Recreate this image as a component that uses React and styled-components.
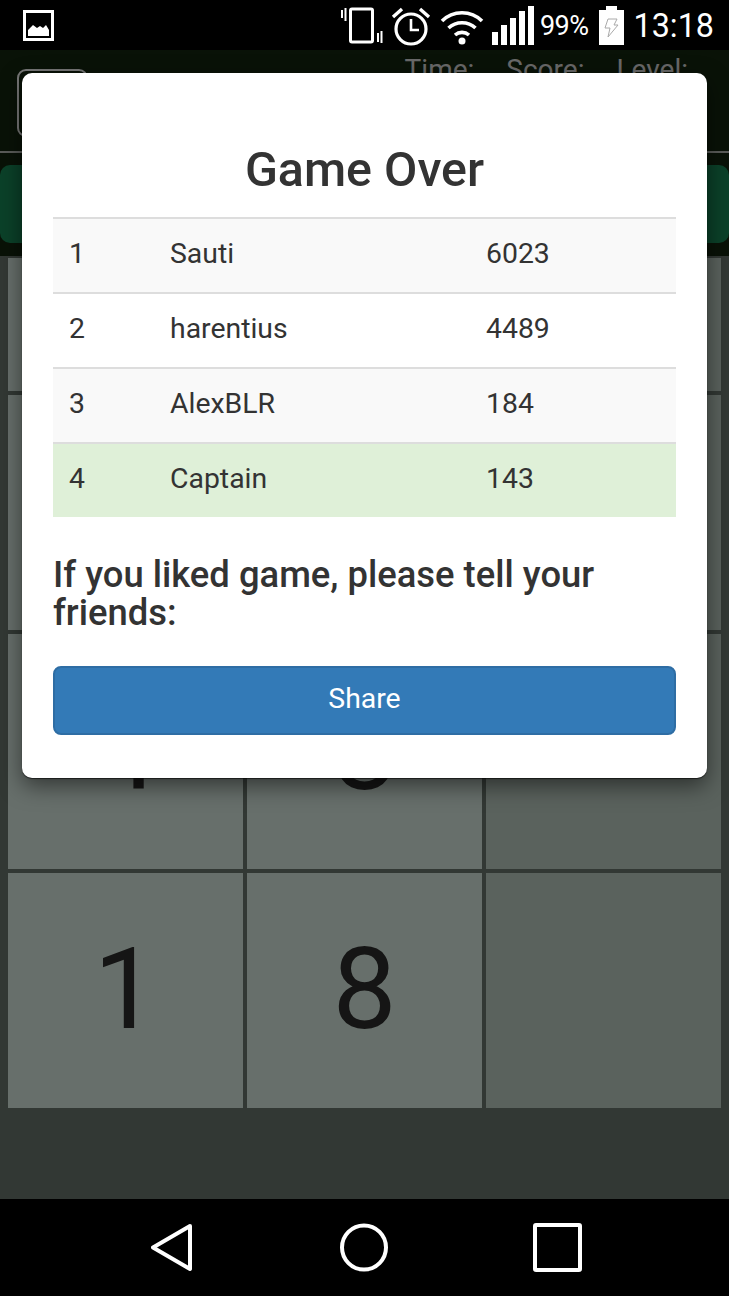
import React from "react";
import styled, { createGlobalStyle } from "styled-components";

const Global = createGlobalStyle`
  html, body { margin: 0; padding: 0; background: #000; }
  * { box-sizing: border-box; }
  #root { width: 729px; height: 1296px; overflow: hidden; }
`;

const Page = styled.div`
  width: 729px;
  height: 1296px;
  display: flex;
  flex-direction: column;
  font-family: Roboto, "Liberation Sans", sans-serif;
  background: #000;
`;

const StatusBar = styled.div`
  height: 50px;
  flex: none;
  background: #000;
  display: flex;
  align-items: center;
  justify-content: space-between;
  padding: 0 15px 0 23px;
  color: #fff;
`;

const StatusRight = styled.div`
  display: flex;
  align-items: center;
  height: 50px;
`;

const Percent = styled.span`
  font-size: 27px;
  letter-spacing: -0.5px;
  margin: 0 10px 0 6px;
  position: relative;
  top: 1px;
`;

const Clock = styled.span`
  font-size: 32.3px;
  margin-left: 10px;
  position: relative;
  top: 1px;
`;

const Stage = styled.div`
  position: relative;
  height: 1149px;
  flex: none;
  background: #657069;
  display: flex;
  flex-direction: column;
  overflow: hidden;
`;

const Header = styled.div`
  height: 103px;
  flex: none;
  background: #12240e;
  border-bottom: 2px solid #b4b8b2;
  display: flex;
  justify-content: space-between;
  padding: 19px 41px 0 17px;
`;

const LogoBox = styled.div`
  width: 71px;
  height: 68px;
  border: 2px solid #eee;
  border-radius: 9px;
`;

const Stats = styled.div`
  display: flex;
  gap: 32px;
  margin-top: -16px;
  font-size: 28px;
  color: #d2d2d2;
`;

const ActionStrip = styled.div`
  height: 103px;
  flex: none;
  background: #12240e;
  padding: 12px 0 13px;
`;

const ActionButton = styled.div`
  height: 78px;
  background: #178253;
  border-radius: 10px;
`;

const Board = styled.div`
  flex: 1;
  background: #657069;
  padding: 2px 8px 0;
  display: grid;
  grid-template-columns: repeat(3, 235px);
  grid-template-rows: 133px 235px 235px 235px;
  gap: 4px;
  align-content: start;
`;

const Cell = styled.div`
  background: ${p => (p.$filled ? "#cfdfd6" : "#b4c4bb")};
  display: flex;
  align-items: center;
  justify-content: center;
  color: #2a2a2a;
  font-size: 114px;
  line-height: 1;
  padding-bottom: 3px;
  font-weight: 400;
  overflow: hidden;
`;

const Backdrop = styled.div`
  position: absolute;
  inset: 0;
  background: rgba(0, 0, 0, 0.5);
  padding: 23px 22px 0;
`;

const Modal = styled.div`
  height: 705px;
  background: #fff;
  border-radius: 10px;
  box-shadow: 0 1px 1px rgba(0, 0, 0, 0.6), 0 8px 22px rgba(0, 0, 0, 0.5);
  padding: 0 31px;
  display: flex;
  flex-direction: column;
  color: #333;
`;

const Title = styled.h2`
  margin: 0;
  height: 144px;
  padding-top: 69px;
  font-size: 48.4px;
  line-height: 55px;
  font-weight: 500;
  text-align: center;
`;

const Scores = styled.div`
  display: flex;
  flex-direction: column;
`;

const ScoreRow = styled.div`
  height: 75px;
  display: grid;
  grid-template-columns: 101px 316px 1fr;
  align-items: center;
  padding: 0 0 5px 16px;
  border-top: 2px solid #ddd;
  font-size: 28.4px;
  background: ${p => p.$bg};
`;

const Invite = styled.h3`
  margin: 39px 0 0;
  font-size: 36.4px;
  line-height: 38px;
  font-weight: 500;
`;

const ShareButton = styled.div`
  margin-top: 34px;
  height: 69px;
  background: #337ab7;
  border: 2px solid #2e6da4;
  border-radius: 8px;
  color: #fff;
  font-size: 28.4px;
  padding-bottom: 4px;
  display: flex;
  align-items: center;
  justify-content: center;
`;

const NavBar = styled.div`
  height: 97px;
  flex: none;
  background: #000;
  display: grid;
  grid-template-columns: 151px 41px 148px 48px 145px 49px;
  padding-top: 24px;
`;

const ImageIcon = () => (
  <svg width="31" height="31" viewBox="0 0 31 31" style={{ marginTop: 1 }}>
    <rect x="1.5" y="1.5" width="28" height="28" fill="none" stroke="#fff" strokeWidth="3" />
    <path d="M5 26v-6l5-5 4 3 3-2 3 2 3-3 3 5v6z" fill="#fff" />
  </svg>
);

const Vibrate = () => (
  <svg width="44" height="40" viewBox="0 0 44 40" style={{ marginRight: 8 }}>
    <rect x="11.500" y="4" width="22" height="33" rx="1.5" fill="none" stroke="#fff" strokeWidth="3" />
    <path d="M3 5v8M6.500 3v13M39 28v9M42.500 26v12" stroke="#fff" strokeWidth="2" />
  </svg>
);

const Alarm = () => (
  <svg width="40" height="42" viewBox="0 0 40 42" style={{ marginRight: 9 }}>
    <circle cx="20" cy="25" r="15" fill="none" stroke="#fff" strokeWidth="3.2" />
    <path d="M20 15v11h8" fill="none" stroke="#fff" strokeWidth="2.6" />
    <path d="M2 13 11 5M38 13 29 5" stroke="#fff" strokeWidth="3.4" />
  </svg>
);

const Wifi = () => (
  <svg width="44" height="36" viewBox="0 0 44 36" style={{ marginRight: 8, marginTop: 4 }}>
    <path d="M2 12C13 1 31 1 42 12M8.500 19C16 12 28 12 35.500 19M15 26c4-3.500 10-3.500 14 0" fill="none" stroke="#fff" strokeWidth="3.600" />
    <circle cx="22" cy="32" r="3.500" fill="#fff" />
  </svg>
);

const Signal = () => (
  <svg width="42" height="39" viewBox="0 0 42 39">
    <path d="M0 26h6v13H0zM9 19h6v20H9zM18 12h6v27h-6zM27 5h6v34h-6zM36 0h6v39h-6z" fill="#fff" />
  </svg>
);

const Battery = () => (
  <svg width="25" height="39" viewBox="0 0 25 39">
    <path d="M7 0h11v4h7v35H0V4h7z" fill="#fff" />
    <path d="M9 13h9l-3 6h4L9 31l2-9H6z" fill="#fff" stroke="#aaa" strokeWidth="1" />
  </svg>
);

const Back = () => (
  <svg width="41" height="49" viewBox="0 0 41 49">
    <path d="M39 3 2 24.500 39 46z" fill="none" stroke="#fff" strokeWidth="4" strokeLinejoin="round" />
  </svg>
);

const Home = () => (
  <svg width="48" height="49" viewBox="0 0 48 49">
    <circle cx="24" cy="24.500" r="22" fill="none" stroke="#fff" strokeWidth="4" />
  </svg>
);

const Recent = () => (
  <svg width="49" height="49" viewBox="0 0 49 49">
    <rect x="2" y="2" width="45" height="45" rx="1" fill="none" stroke="#fff" strokeWidth="4" />
  </svg>
);

const rows = [
  { id: 1, name: "Sauti", score: 6023, bg: "#f9f9f9" },
  { id: 2, name: "harentius", score: 4489, bg: "#fff" },
  { id: 3, name: "AlexBLR", score: 184, bg: "#f9f9f9" },
  { id: 4, name: "Captain", score: 143, bg: "#dff0d8" },
];

const cells = ["", "", "", "", "", "", "4", "8", "", "1", "8", ""];

export default function App() {
  return (
    <Page>
      <Global />
      <StatusBar>
        <ImageIcon />
        <StatusRight>
          <Vibrate />
          <Alarm />
          <Wifi />
          <Signal />
          <Percent>99%</Percent>
          <Battery />
          <Clock>13:18</Clock>
        </StatusRight>
      </StatusBar>
      <Stage>
        <Header>
          <LogoBox />
          <Stats>
            <span>Time:</span>
            <span>Score:</span>
            <span>Level:</span>
          </Stats>
        </Header>
        <ActionStrip>
          <ActionButton />
        </ActionStrip>
        <Board>
          {cells.map((c, i) => (
            <Cell key={i} $filled={i % 3 !== 2}>{c}</Cell>
          ))}
        </Board>
        <Backdrop>
          <Modal>
            <Title>Game Over</Title>
            <Scores>
              {rows.map(r => (
                <ScoreRow key={r.id} $bg={r.bg}>
                  <span>{r.id}</span>
                  <span>{r.name}</span>
                  <span>{r.score}</span>
                </ScoreRow>
              ))}
            </Scores>
            <Invite>If you liked game, please tell your friends:</Invite>
            <ShareButton>Share</ShareButton>
          </Modal>
        </Backdrop>
      </Stage>
      <NavBar>
        <span />
        <Back />
        <span />
        <Home />
        <span />
        <Recent />
      </NavBar>
    </Page>
  );
}
